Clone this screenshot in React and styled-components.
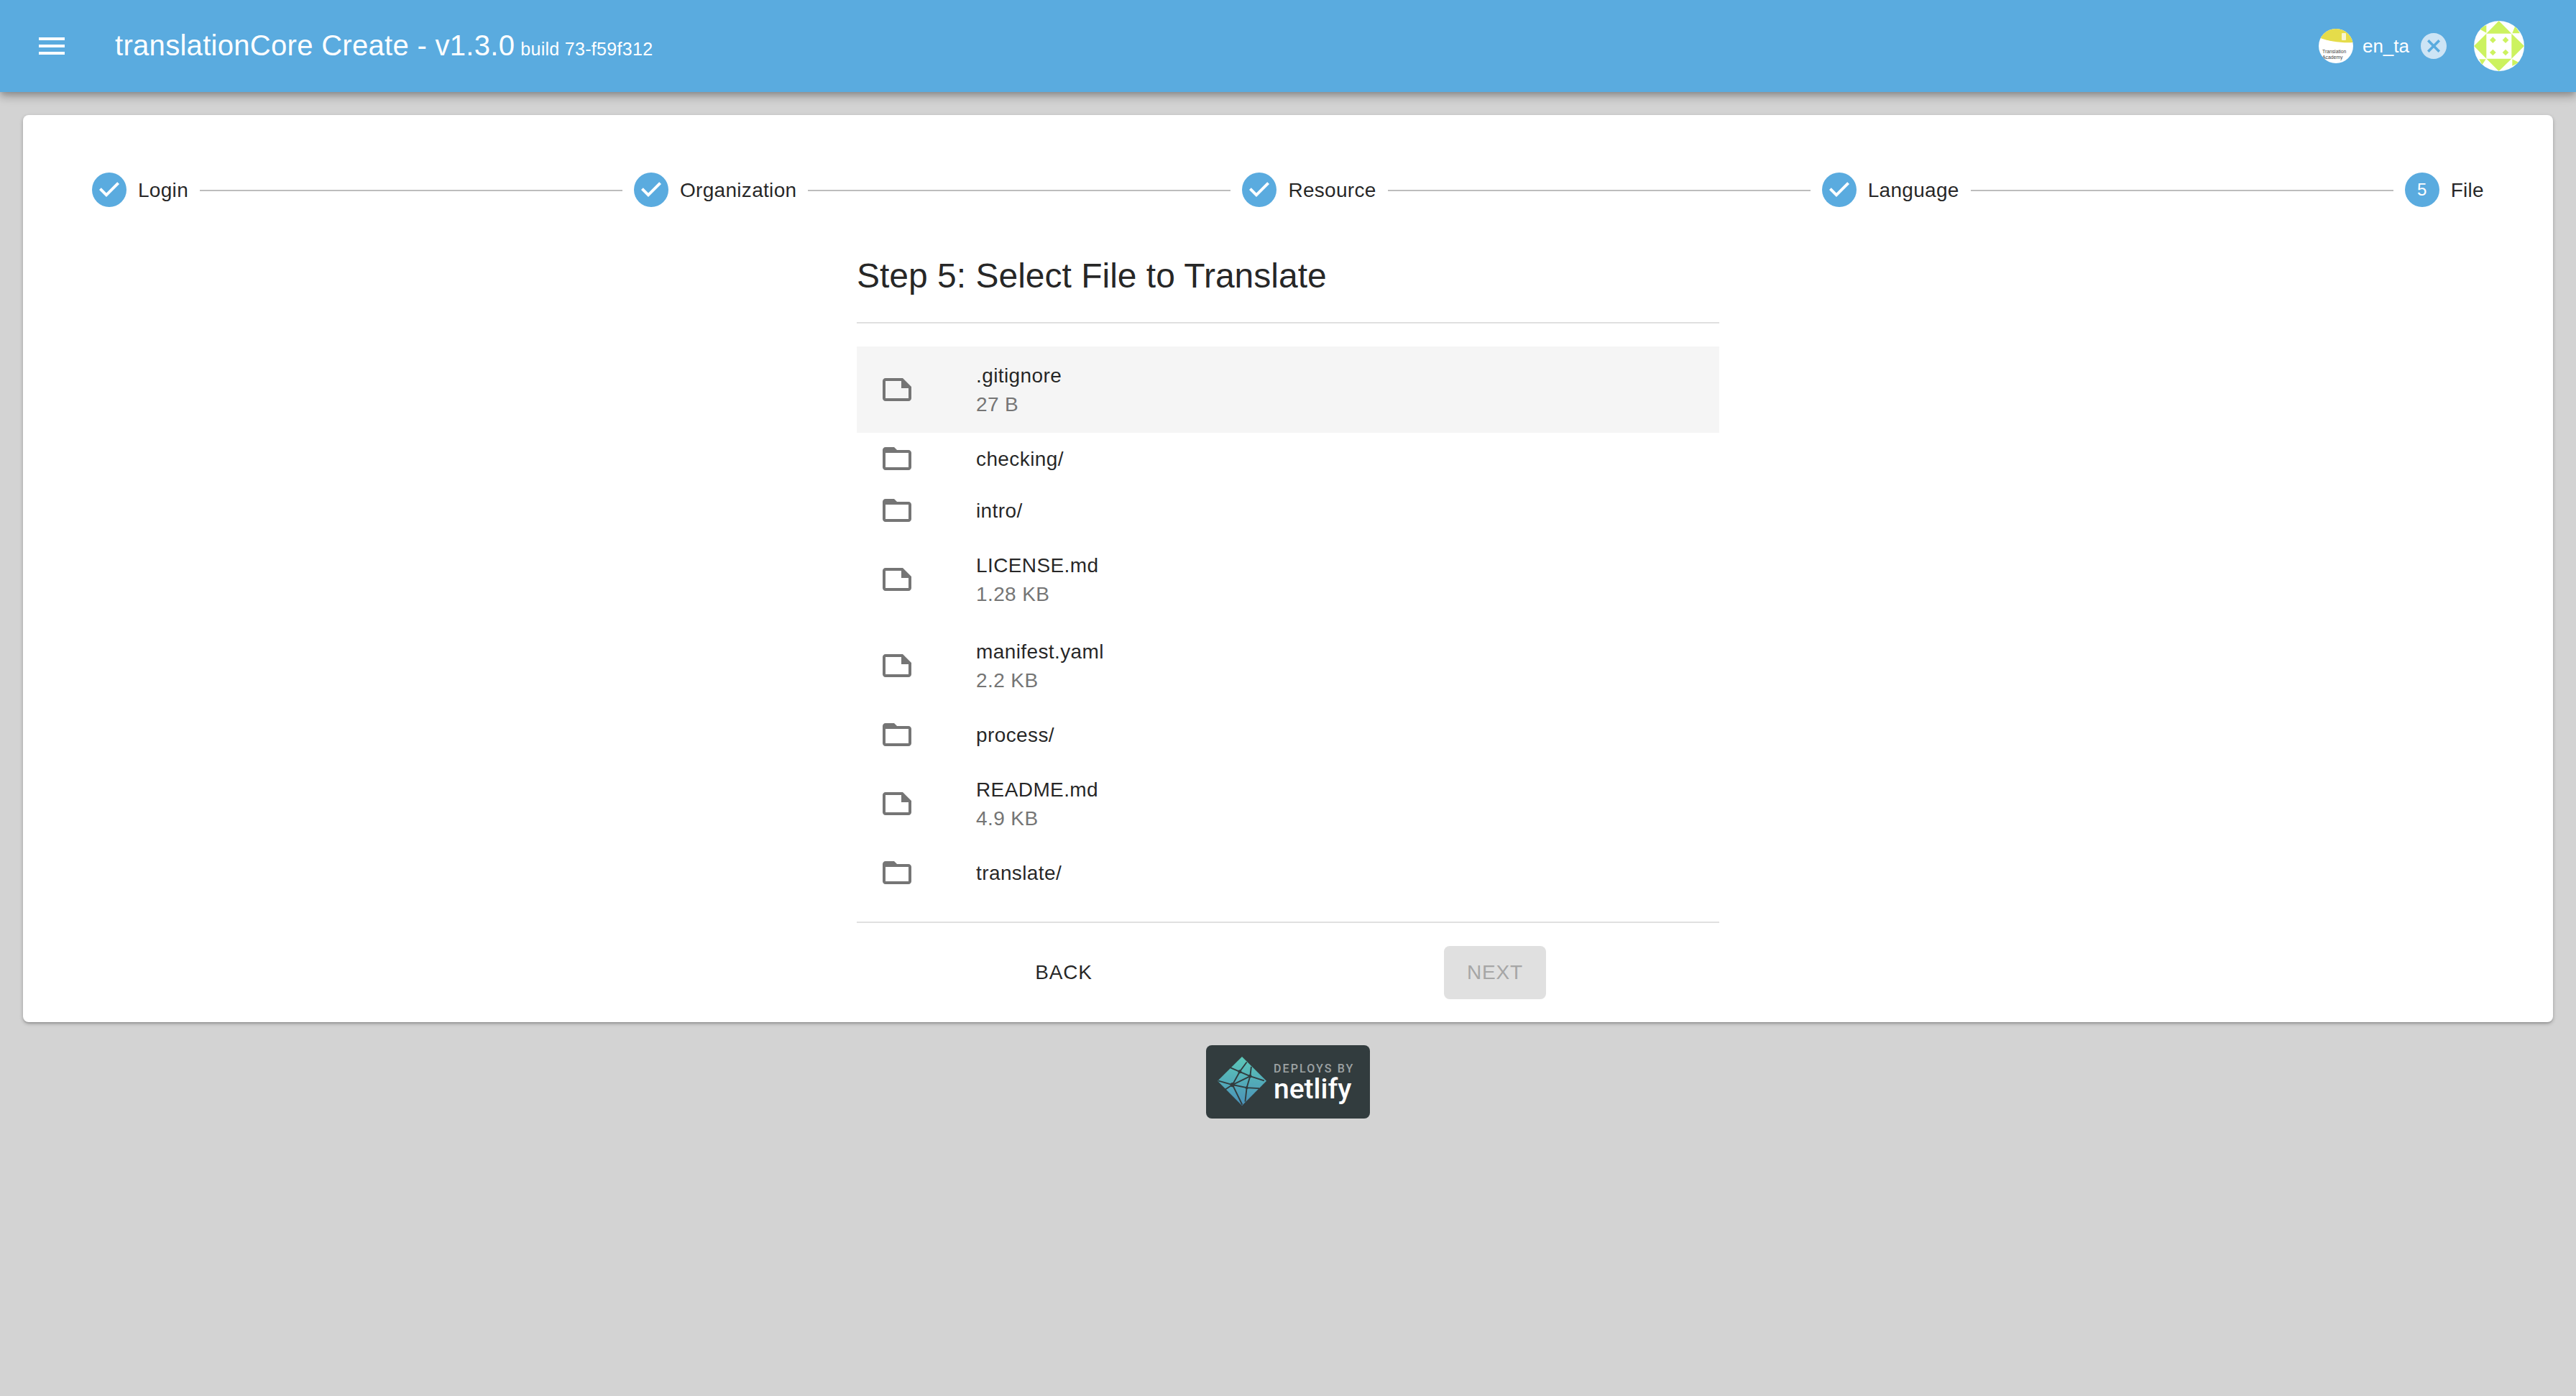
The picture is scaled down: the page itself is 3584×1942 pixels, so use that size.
import React from "react";
import styled, { createGlobalStyle } from "styled-components";

const GlobalStyle = createGlobalStyle`
html, body {
  margin: 0;
  padding: 0;
  background: #d3d3d3;
  font-family: "Liberation Sans", Arial, sans-serif;
}
`;

const Page = styled.div`
min-height: 1942px;
display: flex;
flex-direction: column;
align-items: center;
background: #d3d3d3;
`;

const AppBar = styled.header`
width: 100%;
height: 128px;
box-sizing: border-box;
display: flex;
align-items: center;
padding: 0 72px 0 48px;
background: #5aabdf;
color: #fff;
box-shadow: 0 4px 8px -2px rgba(0,0,0,.2), 0 8px 10px 0 rgba(0,0,0,.14), 0 2px 20px 0 rgba(0,0,0,.12);
`;

const MenuButton = styled.svg`
width: 48px;
height: 48px;
fill: #fff;
margin-right: 64px;
flex: none;
`;

const Title = styled.div`
font-size: 40px;
line-height: 1;
letter-spacing: 0.3px;
white-space: nowrap;
flex: 1;
margin-top: -3px;
`;

const Build = styled.span`
font-size: 25px;
margin-left: 8px;
`;

const RepoChip = styled.div`
display: flex;
align-items: center;
height: 64px;
margin-right: 38px;
`;

const ChipLabel = styled.span`
font-size: 26px;
margin: 0 16px 0 13px;
`;

const ChipClose = styled.svg`
width: 36px;
height: 36px;
flex: none;
`;

const Round = styled.svg`
flex: none;
display: block;
border-radius: 50%;
width: ${({size}) => size}px;
height: ${({size}) => size}px;
`;

const Card = styled.main`
width: 3520px;
box-sizing: border-box;
margin-top: 32px;
padding: 48px 48px 0;
background: #fff;
border-radius: 8px;
box-shadow: 0 2px 2px -1px rgba(0,0,0,.2), 0 2px 4px 0 rgba(0,0,0,.14), 0 2px 6px 0 rgba(0,0,0,.12);
`;

const Stepper = styled.nav`
display: flex;
align-items: center;
padding: 32px 32px 0;
`;

const Step = styled.div`
display: flex;
align-items: center;
gap: 16px;
padding: 0 16px;
flex: none;
`;

const StepDot = styled.div`
width: 48px;
height: 48px;
border-radius: 50%;
background: #5aabdf;
color: #fff;
font-size: 24px;
display: flex;
align-items: center;
justify-content: center;
`;

const StepCheck = styled.svg`
width: 48px;
height: 48px;
fill: #fff;
`;

const StepLabel = styled.span`
font-size: 28px;
line-height: 34px;
padding-top: 1px;
letter-spacing: 0.3px;
color: rgba(0,0,0,.87);
white-space: nowrap;
`;

const Connector = styled.div`
flex: 1;
height: 2px;
margin-top: 1px;
background: #bdbdbd;
`;

const Content = styled.section`
width: 1200px;
margin: 0 auto;
`;

const Heading = styled.h2`
margin: 0;
padding: 67px 0 35px;
font-size: 48px;
font-weight: 400;
line-height: 58px;
color: rgba(0,0,0,.87);
border-bottom: 2px solid #e0e0e0;
`;

const FileList = styled.div`
padding: 32px 0;
border-bottom: 2px solid #e0e0e0;
`;

const Row = styled.div`
display: flex;
align-items: center;
height: ${({tall}) => tall ? 120 : 72}px;
padding-left: 32px;
background: ${({selected}) => selected ? "#f5f5f5" : "transparent"};
`;

const RowIcon = styled.svg`
width: 48px;
height: 48px;
fill: #757575;
margin-right: 86px;
flex: none;
`;

const RowText = styled.div`
padding-top: 2px;
`;

const RowName = styled.div`
font-size: 28px;
line-height: 40px;
letter-spacing: 0.4px;
color: rgba(0,0,0,.87);
`;

const RowSize = styled.div`
font-size: 28px;
line-height: 40px;
letter-spacing: 0.4px;
color: #757575;
`;

const Actions = styled.div`
display: flex;
padding: 32px 0;
`;

const ActionCell = styled.div`
flex: 1;
display: flex;
justify-content: center;
`;

const Button = styled.button`
margin-right: 24px;
padding: 16px 32px;
border: 0;
border-radius: 8px;
font: 400 28px/42px "Liberation Sans", Arial, sans-serif;
letter-spacing: 0.8px;
color: ${({disabled}) => disabled ? "#a6a6a6" : "rgba(0,0,0,.87)"};
background: ${({disabled}) => disabled ? "#e0e0e0" : "transparent"};
`;

const Badge = styled.div`
width: 228px;
height: 102px;
box-sizing: border-box;
margin-top: 32px;
padding: 16px 0 0 16px;
display: flex;
gap: 10px;
background: #323c3e;
border-radius: 8px;
`;

const BadgeLogo = styled.svg`
width: 68px;
height: 68px;
flex: none;
`;

const BadgeText = styled.div`
display: flex;
flex-direction: column;
font-family: Roboto, "Liberation Sans", sans-serif;
`;

const BadgeSmall = styled.span`
font-size: 16px;
font-weight: 500;
letter-spacing: 2.1px;
line-height: 16px;
margin-top: 9px;
color: #9da2a3;
white-space: nowrap;
`;

const BadgeBig = styled.span`
font-size: 39px;
font-weight: 500;
line-height: 36px;
margin-top: 2px;
color: #fff;
`;

const files = [
  { name: ".gitignore", size: "27 B", selected: true },
  { name: "checking/" },
  { name: "intro/" },
  { name: "LICENSE.md", size: "1.28 KB" },
  { name: "manifest.yaml", size: "2.2 KB" },
  { name: "process/" },
  { name: "README.md", size: "4.9 KB" },
  { name: "translate/" },
];

const steps = ["Login", "Organization", "Resource", "Language", "File"];

const FOLDER = "M20 6h-8l-2-2H4c-1.1 0-2 .9-2 2v12c0 1.1.9 2 2 2h16c1.1 0 2-.9 2-2V8c0-1.1-.9-2-2-2zm0 12H4V8h16v10z";
const NOTE = "M16 4H4c-1.1 0-2 .9-2 2v12.01c0 1.1.9 1.99 2 1.99h16c1.1 0 2-.9 2-2v-8l-6-6zM4 18.01V6h11v5h5v7.01H4z";

const OrgAvatar = () => (
  <Round size={48} viewBox="0 0 48 48">
    <rect width="48" height="48" fill="#fff" />
    <path d="M0 0H48V19C34 20 14 18 0 12Z" fill="#e5dc4a" />
    <rect x="32" y="6" width="6" height="10" rx="1" fill="#f7f5d0" />
    <text x="5" y="34" fontSize="6.8" fill="#444" fontFamily="Liberation Sans">Translation</text>
    <text x="5" y="41.5" fontSize="6.8" fill="#444" fontFamily="Liberation Sans">Academy</text>
  </Round>
);

const UserAvatar = () => (
  <Round size={70} viewBox="0 0 210 210">
    <rect width="210" height="210" fill="#fff" />
    <g fill="#ccf25f">
      <path d="M104 0L157 53H52Z" />
      <path d="M0 105L52 53V158Z" />
      <path d="M210 105L157 53V158Z" />
      <path d="M104 210L52 158H157Z" />
      <path d="M79 67L92 80L79 93L66 80Z" />
      <path d="M132 67L145 80L132 93L119 80Z" />
      <path d="M79 119L92 132L79 145L66 132Z" />
      <path d="M132 119L145 132L132 145L119 132Z" />
      <path d="M52 18V50L20 32Z" />
      <path d="M160 52H192L172 22Z" />
      <path d="M22 160H50L34 184Z" />
      <path d="M160 160L188 174L160 188Z" />
    </g>
  </Round>
);

const NetlifyLogo = () => (
  <BadgeLogo viewBox="6 6 216 216">
    <defs>
      <linearGradient id="netlifyFill" x1="0" y1="0" x2="0" y2="1">
        <stop offset="0" stopColor="#5cc8b8" />
        <stop offset="1" stopColor="#4a90b8" />
      </linearGradient>
    </defs>
    <path d="M114 6L222 113L114 222L6 113Z" fill="url(#netlifyFill)" />
    <g stroke="#323c3e" strokeWidth="6" fill="none">
      <path d="M104 72L135 30M104 72L62 54M104 72L150 92M104 72L72 130M150 92L155 50M150 92L212 112M150 92L72 130M72 130L135 143M150 92L135 143M135 143L190 146M135 143L128 205M72 130L8 112M72 130L38 152M72 130L115 218" />
    </g>
    <g fill="#323c3e">
      <circle cx="104" cy="72" r="8" />
      <circle cx="150" cy="92" r="7" />
      <circle cx="72" cy="130" r="10" />
      <circle cx="135" cy="143" r="6" />
    </g>
  </BadgeLogo>
);

const App = () => (
  <Page>
    <GlobalStyle />
    <AppBar>
      <MenuButton viewBox="0 0 24 24">
        <path d="M3 18h18v-2H3v2zm0-5h18v-2H3v2zm0-7v2h18V6H3z" />
      </MenuButton>
      <Title>
        translationCore Create - v1.3.0<Build>build 73-f59f312</Build>
      </Title>
      <RepoChip>
        <OrgAvatar />
        <ChipLabel>en_ta</ChipLabel>
        <ChipClose viewBox="0 0 24 24">
          <path fill="#cde4f5" d="M12 0C5.37 0 0 5.37 0 12s5.37 12 12 12 12-5.37 12-12S18.63 0 12 0zm6 16.3L16.3 18 12 13.7 7.7 18 6 16.3 10.3 12 6 7.7 7.7 6 12 10.3 16.3 6 18 7.7 13.7 12l4.3 4.3z" />
        </ChipClose>
      </RepoChip>
      <UserAvatar />
    </AppBar>

    <Card>
      <Stepper>
        {steps.map((label, i) => (
          <React.Fragment key={label}>
            {i > 0 && <Connector />}
            <Step>
              <StepDot>
                {i < 4 ? (
                  <StepCheck viewBox="0 0 24 24">
                    <path d="M10 17l-5-5 1.4-1.4 3.6 3.6 7.6-7.6L19 8l-9 9z" />
                  </StepCheck>
                ) : "5"}
              </StepDot>
              <StepLabel>{label}</StepLabel>
            </Step>
          </React.Fragment>
        ))}
      </Stepper>

      <Content>
        <Heading>Step 5: Select File to Translate</Heading>
        <FileList>
          {files.map((f) => (
            <Row key={f.name} tall={!!f.size} selected={f.selected}>
              <RowIcon viewBox="0 0 24 24">
                <path d={f.size ? NOTE : FOLDER} />
              </RowIcon>
              <RowText>
                <RowName>{f.name}</RowName>
                {f.size && <RowSize>{f.size}</RowSize>}
              </RowText>
            </Row>
          ))}
        </FileList>
        <Actions>
          <ActionCell><Button>BACK</Button></ActionCell>
          <ActionCell><Button disabled>NEXT</Button></ActionCell>
        </Actions>
      </Content>
    </Card>

    <Badge>
      <NetlifyLogo />
      <BadgeText>
        <BadgeSmall>DEPLOYS BY</BadgeSmall>
        <BadgeBig>netlify</BadgeBig>
      </BadgeText>
    </Badge>
  </Page>
);

export default App;
